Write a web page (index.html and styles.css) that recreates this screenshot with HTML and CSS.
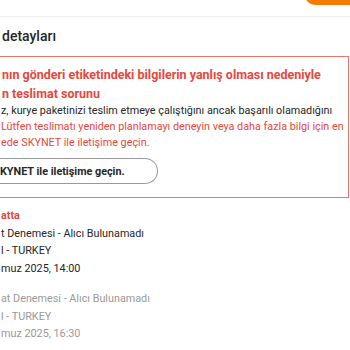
FILE: index.html
```html
<!DOCTYPE html>
<html lang="tr">
<head>
    <meta charset="UTF-8">
    <meta name="viewport" content="width=device-width, initial-scale=1.0">
    <title>Gönderi detayları</title>
    <link rel="stylesheet" href="styles.css">
</head>
<body>
    <div class="topbar">
        <button class="track-btn">Takip et</button>
    </div>
    <h1 class="title">detayları</h1>
    <div class="alert">
        <h2 class="alert-title">nın gönderi etiketindeki bilgilerin yanlış olması nedeniyle<br>n teslimat sorunu</h2>
        <p class="alert-text">z, kurye paketinizi teslim etmeye çalıştığını ancak başarılı olamadığını<br><span class="hl">Lütfen teslimatı yeniden planlamayı deneyin veya daha fazla bilgi için en<br>ede SKYNET ile iletişime geçin.</span></p>
        <button class="contact-btn">KYNET ile iletişime geçin.</button>
    </div>
    <div class="timeline">
        <div class="event">
            <div class="event-status">atta</div>
            <div class="event-line">t Denemesi - Alıcı Bulunamadı</div>
            <div class="event-line">l - TURKEY</div>
            <div class="event-line">muz 2025, 14:00</div>
        </div>
        <div class="event past">
            <div class="event-line">at Denemesi - Alıcı Bulunamadı</div>
            <div class="event-line">l - TURKEY</div>
            <div class="event-line">muz 2025, 16:30</div>
        </div>
    </div>
</body>
</html>
```

FILE: styles.css
```css
body {
    margin: 0;
    font-family: Roboto, Arial, sans-serif;
    background: #fff;
    color: #262626;
    overflow: hidden;
}
.topbar {
    height: 16px;
    border-bottom: 1px solid #eee;
    display: flex;
    justify-content: flex-end;
    overflow: hidden;
}
.track-btn {
    width: 46px;
    height: 30px;
    margin-top: -25px;
    border: none;
    border-radius: 0 0 0 12px;
    background: #f57c00;
    color: transparent;
}
.title {
    margin: 0;
    padding: 9px 0 0 2px;
    height: 30px;
    font-size: 14px;
    font-weight: 500;
    line-height: 20px;
}
.alert {
    border: 1px solid #ec7468;
    border-left: none;
    margin-right: 1px;
    padding: 8px 0 13px 0;
}
.alert-title {
    margin: 0;
    padding-left: 2px;
    font-size: 12.5px;
    line-height: 19px;
    font-weight: 700;
    color: #e8473d;
    white-space: nowrap;
}
.alert-text {
    margin: 0;
    font-size: 10.8px;
    line-height: 16px;
    padding-left: 1px;
    white-space: nowrap;
}
.hl {
    color: #e8473d;
}
.contact-btn {
    margin-top: 7px;
    height: 26px;
    width: 158px;
    border: 1px solid #9a9a9a;
    border-left: none;
    border-radius: 0 13px 13px 0;
    background: #fff;
    font-family: inherit;
    font-size: 10.8px;
    font-weight: 700;
    color: #262626;
    text-align: left;
    padding: 0;
}
.timeline {
    padding: 9px 0 0 1px;
}
.event {
    font-size: 10.8px;
    line-height: 17.5px;
}
.event-status {
    color: #e8473d;
    font-weight: 700;
}
.past {
    margin-top: 13px;
    color: #999;
}
```
